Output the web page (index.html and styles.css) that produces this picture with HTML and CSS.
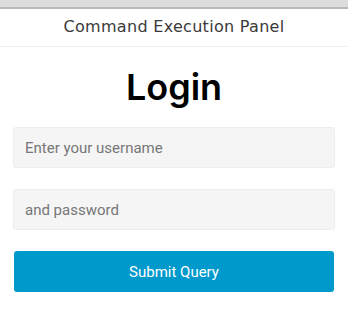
FILE: index.html
```html
<!DOCTYPE html>
<html lang="en">
<head>
    <meta charset="UTF-8">
    <meta name="viewport" content="width=device-width, initial-scale=1.0">
    <title>Command Execution Panel</title>
    <link rel="stylesheet" href="styles.css">
</head>
<body>
    <div class="topbar"></div>
    <header class="header">Command Execution Panel</header>

    <div class="login-container">
        <h1 class="title">Login</h1>
        <form class="login-form">
            <input type="text" class="field" placeholder="Enter your username" autofocus>
            <input type="password" class="field" placeholder="and password">
            <button type="submit" class="submit-btn">Submit Query</button>
        </form>
    </div>
</body>
</html>
```

FILE: styles.css
```css
body {
    margin: 0;
    padding: 0;
    background-color: #fff;
    font-family: 'Roboto', sans-serif;
}

.topbar {
    height: 7px;
    background-color: #dcdcdc;
    border-bottom: 2px solid #b8b8b8;
}

.header {
    height: 37px;
    line-height: 36px;
    text-align: center;
    font-family: 'DejaVu Sans', sans-serif;
    font-size: 16px;
    letter-spacing: 0.3px;
    color: #3a3a3a;
    border-bottom: 1px solid #eee;
}

.login-container {
    padding: 0 13px;
}

.title {
    margin: 18px 0 18px 0;
    text-align: center;
    font-family: 'Inter', sans-serif;
    font-size: 36px;
    font-weight: 600;
    line-height: 44px;
    color: #000;
}

.login-form {
    display: flex;
    flex-direction: column;
    gap: 21px;
}

.field {
    box-sizing: border-box;
    width: 100%;
    height: 41px;
    margin: 0;
    padding: 0 11px;
    background-color: #f5f5f5;
    border: 1px solid #ededed;
    border-radius: 3px;
    font-family: 'Roboto', sans-serif;
    font-size: 15px;
    color: #333;
    caret-color: #000;
    outline: none;
}

.field::placeholder {
    color: #777;
}

.submit-btn {
    box-sizing: border-box;
    height: 41px;
    margin: 0 1px;
    background-color: #0099cc;
    border: none;
    border-radius: 3px;
    color: #fff;
    font-family: 'Roboto', sans-serif;
    font-size: 15px;
    cursor: pointer;
}
```
